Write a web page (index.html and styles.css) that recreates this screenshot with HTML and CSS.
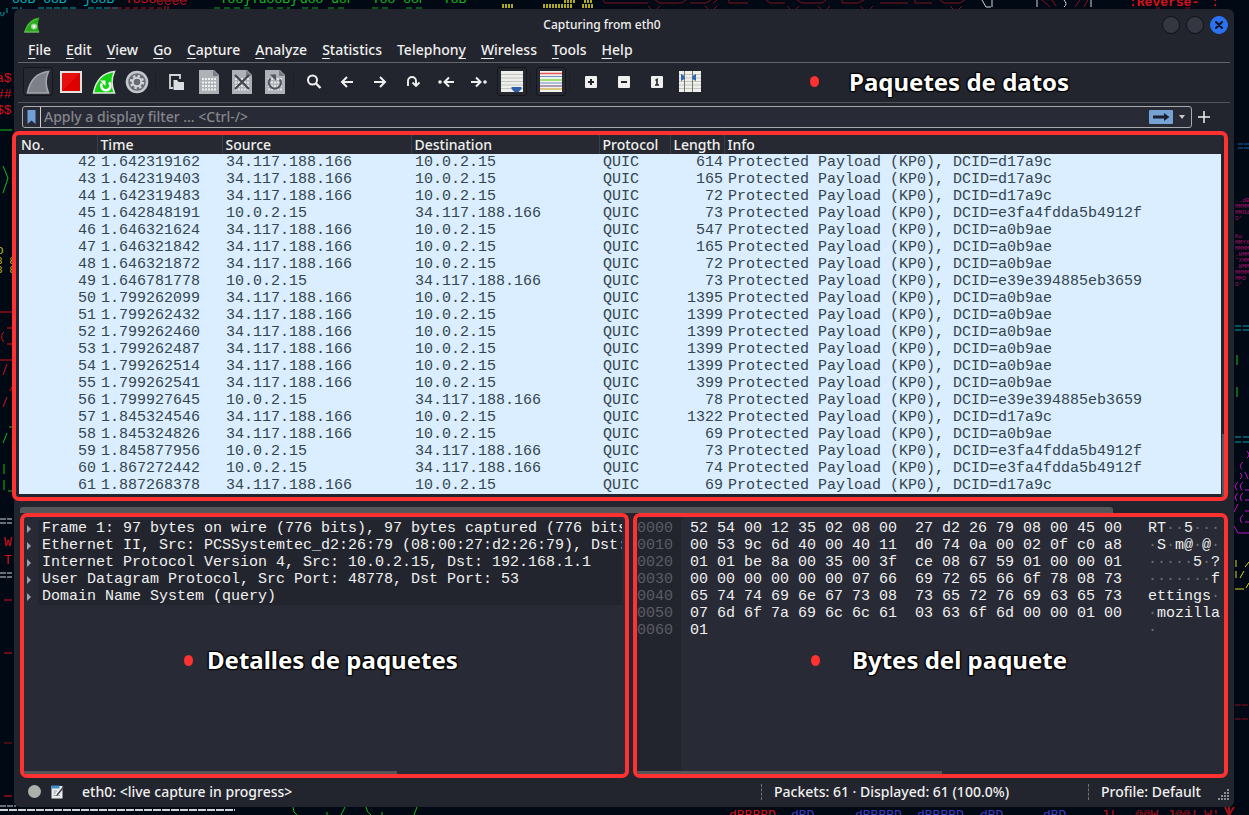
FILE: index.html
```html
<!DOCTYPE html>
<html lang="en">
<head>
<meta charset="utf-8">
<title>Capturing from eth0</title>
<link rel="stylesheet" href="styles.css">
</head>
<body>
<svg class="wallpaper" aria-hidden="true">
  <g class="art">
    <g class="cyan"><text x="12" y="3">o8B o8B</text><text x="83" y="3">j88B</text></g>
    <g class="red"><text x="125" y="3">Y8S8@@@@"</text><text x="4" y="546">W</text><text x="4" y="564">T</text><text x="-4" y="82">a$</text><text x="-4" y="98">##</text><text x="-4" y="114">$$</text><text x="1129" y="6" class="bold">:Reverse-</text><text x="1211" y="6">:</text><text x="729" y="819">dBBBBD</text></g>
    <g class="green"><text x="212" y="3">`Y88}Yd88B}</text><text x="300" y="3">d88 d8P</text><text x="372" y="3">Y88 88P</text><text x="443" y="3">Y8B</text></g>
    <g class="yellow"><text x="-4" y="254">o d</text><text x="-4" y="264" class="small">8 8</text><text x="-4" y="273" class="small">8 8</text></g>
    <g class="blue"><text x="791" y="819">dBD</text><text x="855" y="819">dBBBBD</text><text x="917" y="819">dBBBBD</text><text x="980" y="819">dBD</text><text x="1043" y="819">dBD</text></g>
    <g class="darkred"><text x="1101" y="819" class="bold">J|</text><text x="1135" y="819" class="bold">@@W</text><text x="1167" y="819" class="bold">J@@|</text><text x="1204" y="819" class="bold">W'</text></g>
    <g class="tiny"><text x="1235" y="202">..dBd</text><text x="1235" y="208">MMMM</text><text x="1235" y="214">MMOdd</text><text x="1235" y="220">O'</text><text x="1235" y="238">Ko</text><text x="1235" y="244">MMYXo</text><text x="1235" y="250">MMMMM</text><text x="1235" y="256">.HMMM</text><text x="1235" y="262">'XMMM</text><text x="1235" y="268">.WMMM</text><text x="1235" y="274">MMMMH</text><text x="1235" y="280">MMO</text><text x="1235" y="286">O'</text></g>
  </g>
  <g class="lines">
    <path stroke="#00a0aa" stroke-dasharray="6 2" d="M12 8H22M38 8H76M88 8H118M1235 326H1249M1235 330H1249M1235 437H1249M1235 442H1249"/>
    <path stroke="#00a0aa" d="M1 12C-1 17 5 17 4 12M7 8V13"/>
    <path stroke="#0a64b4" stroke-dasharray="5 1" d="M1238 144H1249M1238 148H1249"/>
    <path stroke="#a01018" stroke-dasharray="5 3" d="M109 8H162"/>
    <path stroke="#d8101c" d="M165 6V9M168 6V9M0 312H12M7 328H12M4 332C1 334 1 340 4 342M7 344H12M0 360H12M7 364L3 375M12 387L10 391M7 397L3 407M4 600H12M4 653H12M4 796H12"/>
    <path stroke="#8a0f1c" d="M4 743H12"/>
    <path stroke="#7d101c" d="M603 0L605 3H648M655 0L660 3H682L686 0M690 3H706L711 0M717 0L713 3M729 0V3H748M766 0L770 3H785M797 0L802 3H822L826 0M842 0V3H858L864 0M880 3H908M915 0V3H932M940 0L944 3H960L965 0M648 6L651 9M657 9L660 6M705 6L708 9M714 9L717 6M787 6L790 9M796 9L799 6M818 6L821 9M827 9L830 6M860 6L863 9M870 9L873 6M950 6L953 9M959 9L962 6"/>
    <path stroke="#8a0f1c" d="M1042 0L1050 7M1052 0L1056 6M1080 0L1075 7M1088 0L1084 7M1185 8H1190M1156 8H1160"/>
    <path stroke="#8a0f1c" stroke-dasharray="6 1" d="M1235 705H1249M1235 719H1249"/>
    <path stroke="#a01018" stroke-width="2" d="M1225 807L1229 815M1234 807L1229 815M1229 806V815"/>
    <path stroke="#14a01e" stroke-dasharray="6 4" d="M214 8H250M267 8H290M302 8H318M328 8H344M372 8H388M406 8H426"/>
    <path stroke="#14b81e" d="M0 130H12M3 166L8 178L3 193M7 433L3 443M9 427H12M4 464V474M4 480V490M8 491H12M1237 355V365M1237 387V397M293 807Q293 813 297 815M327 812V815M345 807L341 815M366 807Q367 813 371 815M382 812V815M417 807L414 815"/>
    <path stroke="#d0d4d8" d="M982 0L986 7H991M992 0V7M1037 0V7M1064 0Q1068 4 1064 7M1091 0V7"/>
    <path stroke="#d0d4d8" stroke-dasharray="6 1" d="M0 519H12M0 523H12M0 573H12M0 577H12M0 806H16"/>
    <path stroke="#d0d4d8" stroke-width="2" stroke-dasharray="8 1" d="M0 810H235"/>
    <path stroke="#b0aa18" stroke-width="4" stroke-dasharray="2 1" d="M502 6H513M543 6H573M582 6H593M564 1H576M584 1H593"/>
    <path stroke="#c010c4" d="M1247 451Q1251 455 1247 458M1243 462Q1238 466 1242 469M1240 473Q1244 476 1240 479M1245 472L1248 479M1238 482Q1233 486 1237 490M1243 482Q1238 486 1242 490M1245 490H1249M1238 493Q1233 497 1237 501M1243 493Q1238 497 1242 501M1245 500H1249M1238 504L1234 512M1245 511H1249M1243 515Q1238 519 1242 523M1245 522H1249M1234 526L1238 533H1249"/>
    <path stroke="#d8d414" d="M1236 560V567M1236 571V578M1249 562L1245 567M1244 571L1240 578M1249 583L1246 588M1235 589H1244"/>
  </g>
</svg>

<main class="window">
  <header class="titlebar">
    <svg class="logo" viewBox="0 0 16 16"><path d="M0.5 15.5C2 7 7 1.500 15.500 0.500C13.500 5 13.500 10 15.500 15.500Z" fill="#2aa81c"/><path d="M0.500 15.500C3 8 7 3.500 13 2" fill="none" stroke="#57c84b"/><path d="M1 15H15" stroke="#86bd80"/><circle cx="10" cy="9.500" r="3" fill="#a5d7a0"/><circle cx="10" cy="9.500" r="1.300" fill="#fff"/></svg>
    <h1>Capturing from eth0</h1>
    <div class="controls">
      <button class="ctl" aria-label="Minimize"></button>
      <button class="ctl" aria-label="Maximize"></button>
      <button class="ctl close" aria-label="Close"><svg viewBox="0 0 8 8"><path d="M1 1L7 7M7 1L1 7" stroke="#10131c" stroke-width="2" stroke-linecap="round"/></svg></button>
    </div>
  </header>

  <nav class="menubar">
    <button><u>F</u>ile</button><button><u>E</u>dit</button><button><u>V</u>iew</button><button><u>G</u>o</button><button><u>C</u>apture</button><button><u>A</u>nalyze</button><button><u>S</u>tatistics</button><button>Telephon<u>y</u></button><button><u>W</u>ireless</button><button><u>T</u>ools</button><button><u>H</u>elp</button>
  </nav>

  <div class="toolbar">
    <button class="tool on" aria-label="Start capture"><svg viewBox="0 0 24 24"><path d="M1.500 23C3.500 12 9 3 22.500 1.500C19 9 19.500 16 22.500 23Z" fill="#7d8088" stroke="#a5a8ae" stroke-width="1.600"/></svg></button>
    <button class="tool" aria-label="Stop capture"><svg viewBox="0 0 24 24"><rect x="2" y="2" width="20" height="20" fill="#df0000" stroke="#e6e2de" stroke-width="2"/><path d="M3 21L21 3H3Z" fill="#f02020" opacity=".5"/></svg></button>
    <button class="tool" aria-label="Restart capture"><svg viewBox="0 0 24 24"><path d="M1.500 23C3.500 12 9 3 22.500 1.500C19 9 19.500 16 22.500 23Z" fill="#14d214" stroke="#dfe8dd" stroke-width="1.500"/><path d="M10 13.500A4.500 4.500 0 1 0 17 12.500" fill="none" stroke="#fff" stroke-width="2.600"/><path d="M8 10.500H13.500V16Z" fill="#fff"/></svg></button>
    <button class="tool" aria-label="Capture options"><svg viewBox="0 0 24 24"><circle cx="12" cy="12" r="10" fill="#686b74" stroke="#c4c6cb" stroke-width="2.600"/><circle cx="12" cy="12" r="6" fill="none" stroke="#d2d4d8" stroke-width="2.400" stroke-dasharray="2.400 2.300"/><circle cx="12" cy="12" r="4.300" fill="none" stroke="#d2d4d8" stroke-width="2"/></svg></button>
    <span class="sep"></span>
    <button class="tool" aria-label="Open"><svg viewBox="0 0 24 24"><path d="M9 18H6V5H16V9" fill="none" stroke="#d5d6d9" stroke-width="1.800"/><path d="M9.500 10H13L14.500 12H20V20H9.500Z" fill="#dcdde0"/></svg></button>
    <button class="tool" aria-label="Save"><svg viewBox="0 0 24 24"><path d="M2 0H17L22 5V24H2Z" fill="#aeb1b7"/><path d="M16 0V6H22Z" fill="#787b83"/><path d="M5 9H19M5 12.500H19M5 16H19M5 19.500H19" stroke="#f0f0f1" stroke-width="2.200" stroke-dasharray="2 1"/></svg></button>
    <button class="tool" aria-label="Close file"><svg viewBox="0 0 24 24"><path d="M2 0H17L22 5V24H2Z" fill="#aeb1b7"/><path d="M16 0V6H22Z" fill="#787b83"/><path d="M5 9H19M5 12.500H19M5 16H19M5 19.500H19" stroke="#e5e6e8" stroke-width="2.200" stroke-dasharray="2 1"/><path d="M5 5L19 19M19 5L5 19" stroke="#41444c" stroke-width="2"/></svg></button>
    <button class="tool" aria-label="Reload file"><svg viewBox="0 0 24 24"><path d="M2 0H17L22 5V24H2Z" fill="#aeb1b7"/><path d="M16 0V6H22Z" fill="#787b83"/><path d="M5 9H19M5 12.500H19M5 16H19M5 19.500H19" stroke="#e5e6e8" stroke-width="2.200" stroke-dasharray="2 1"/><path d="M7.500 8.500A6 6 0 1 0 17 9.500" fill="none" stroke="#545760" stroke-width="2.200"/><path d="M7 4.500H13V11Z" fill="#545760"/></svg></button>
    <span class="sep"></span>
    <button class="tool" aria-label="Find"><svg viewBox="0 0 24 24"><circle cx="10.500" cy="10" r="4.500" fill="none" stroke="#f0f0f0" stroke-width="2"/><path d="M14 13.500L18.500 18" stroke="#f0f0f0" stroke-width="2.400"/></svg></button>
    <button class="tool" aria-label="Previous"><svg viewBox="0 0 24 24"><path d="M18 12H7M12 7L7 12L12 17" fill="none" stroke="#f0f0f0" stroke-width="2"/></svg></button>
    <button class="tool" aria-label="Next"><svg viewBox="0 0 24 24"><path d="M6 12H17M12 7L17 12L12 17" fill="none" stroke="#f0f0f0" stroke-width="2"/></svg></button>
    <button class="tool" aria-label="Go to packet"><svg viewBox="0 0 24 24"><path d="M7 16V11A4 4 0 0 1 15 11V15M11.500 12.500L15 16L18.500 12.500" fill="none" stroke="#f0f0f0" stroke-width="1.900"/></svg></button>
    <button class="tool" aria-label="First packet"><svg viewBox="0 0 24 24"><path d="M20 12H11M15 7.500L10.500 12L15 16.500" fill="none" stroke="#f0f0f0" stroke-width="2"/><circle cx="6" cy="12" r="1.800" fill="#f0f0f0"/></svg></button>
    <button class="tool" aria-label="Last packet"><svg viewBox="0 0 24 24"><path d="M4 12H13M9 7.500L13.500 12L9 16.500" fill="none" stroke="#f0f0f0" stroke-width="2"/><circle cx="18" cy="12" r="1.800" fill="#f0f0f0"/></svg></button>
    <button class="tool on" aria-label="Auto scroll"><svg viewBox="0 0 24 24"><rect x="1" y="1" width="22" height="21" fill="#eeeeeb"/><path d="M1 4.500H23M1 8H23M1 11.500H23M1 15H23M1 18.500H23" stroke="#c3c3bf"/><path d="M11.500 17H21.500V19L18.500 22H14.500L11.500 19Z" fill="#2d5fa8"/></svg></button>
    <span class="sep"></span>
    <button class="tool on" aria-label="Colorize"><svg viewBox="0 0 24 24"><rect x="1" y="1" width="22" height="21" fill="#f1f1ee"/><path d="M1 3.500H23" stroke="#ef5555" stroke-width="1.500"/><path d="M1 6.500H23M1 13H23" stroke="#6e8fc4" stroke-width="1.200"/><path d="M1 10H23" stroke="#86d94d" stroke-width="1.500"/><path d="M1 16H23" stroke="#8a6b99" stroke-width="1.300"/><path d="M1 19H23" stroke="#d3b456" stroke-width="1.500"/></svg></button>
    <span class="sep wide"></span>
    <button class="tool" aria-label="Zoom in"><svg viewBox="0 0 24 24"><rect x="6" y="6" width="12" height="12" rx="1" fill="#efefef"/><path d="M9 12H15M12 9V15" stroke="#22242c" stroke-width="2"/></svg></button>
    <button class="tool" aria-label="Zoom out"><svg viewBox="0 0 24 24"><rect x="6" y="6" width="12" height="12" rx="1" fill="#efefef"/><path d="M9 12H15" stroke="#22242c" stroke-width="2"/></svg></button>
    <button class="tool" aria-label="Normal size"><svg viewBox="0 0 24 24"><rect x="6" y="6" width="12" height="12" rx="1" fill="#efefef"/><path d="M10.500 10.500L12 9.500V15M10 15H14" fill="none" stroke="#22242c" stroke-width="1.600"/></svg></button>
    <button class="tool" aria-label="Resize columns"><svg viewBox="0 0 24 24"><rect x="1" y="1" width="22" height="21" fill="#eeeeeb"/><path d="M1 4.500H23M1 8H23M1 11.500H23M1 15H23M1 18.500H23" stroke="#c3c3bf"/><path d="M6.500 1V22M14.500 1V22" stroke="#77776f"/><path d="M3 4L6.500 6V9L3 11ZM18 4L14.500 6V9L18 11Z" fill="#2d66b4"/></svg></button>
    <p class="callout callout-list"><i></i>Paquetes de datos</p>
  </div>

  <form class="filterbar">
    <div class="filter">
      <button type="button" class="bookmark" aria-label="Bookmarks"><svg viewBox="0 0 9 14"><path d="M0.500 0H8.500V14L4.500 10.500L0.500 14Z" fill="#6fa0d8"/></svg></button>
      <input type="text" aria-label="Display filter" placeholder="Apply a display filter … &lt;Ctrl-/&gt;">
      <button type="button" class="apply" aria-label="Apply filter"><svg viewBox="0 0 24 14"><rect width="24" height="14" rx="1" fill="#76a3d6"/><path d="M4 5.500H15V3L20.500 7L15 11V8.500H4Z" fill="#1b2130"/></svg></button>
      <button type="button" class="history" aria-label="Recent filters"></button>
    </div>
    <button type="button" class="add" aria-label="Add filter button"><svg viewBox="0 0 12 12"><path d="M6 0V12M0 6H12" stroke="#f0f0f0" stroke-width="1.500"/></svg></button>
  </form>

  <section class="packets frame">
    <table>
      <colgroup><col class="c-no"><col class="c-time"><col class="c-src"><col class="c-dst"><col class="c-proto"><col class="c-len"><col></colgroup>
      <thead><tr><th>No.</th><th>Time</th><th>Source</th><th>Destination</th><th>Protocol</th><th>Length</th><th>Info</th></tr></thead>
      <tbody>
<tr><td>42</td><td>1.642319162</td><td>34.117.188.166</td><td>10.0.2.15</td><td>QUIC</td><td>614</td><td>Protected Payload (KP0), DCID=d17a9c</td></tr>
<tr><td>43</td><td>1.642319403</td><td>34.117.188.166</td><td>10.0.2.15</td><td>QUIC</td><td>165</td><td>Protected Payload (KP0), DCID=d17a9c</td></tr>
<tr><td>44</td><td>1.642319483</td><td>34.117.188.166</td><td>10.0.2.15</td><td>QUIC</td><td>72</td><td>Protected Payload (KP0), DCID=d17a9c</td></tr>
<tr><td>45</td><td>1.642848191</td><td>10.0.2.15</td><td>34.117.188.166</td><td>QUIC</td><td>73</td><td>Protected Payload (KP0), DCID=e3fa4fdda5b4912f</td></tr>
<tr><td>46</td><td>1.646321624</td><td>34.117.188.166</td><td>10.0.2.15</td><td>QUIC</td><td>547</td><td>Protected Payload (KP0), DCID=a0b9ae</td></tr>
<tr><td>47</td><td>1.646321842</td><td>34.117.188.166</td><td>10.0.2.15</td><td>QUIC</td><td>165</td><td>Protected Payload (KP0), DCID=a0b9ae</td></tr>
<tr><td>48</td><td>1.646321872</td><td>34.117.188.166</td><td>10.0.2.15</td><td>QUIC</td><td>72</td><td>Protected Payload (KP0), DCID=a0b9ae</td></tr>
<tr><td>49</td><td>1.646781778</td><td>10.0.2.15</td><td>34.117.188.166</td><td>QUIC</td><td>73</td><td>Protected Payload (KP0), DCID=e39e394885eb3659</td></tr>
<tr><td>50</td><td>1.799262099</td><td>34.117.188.166</td><td>10.0.2.15</td><td>QUIC</td><td>1395</td><td>Protected Payload (KP0), DCID=a0b9ae</td></tr>
<tr><td>51</td><td>1.799262432</td><td>34.117.188.166</td><td>10.0.2.15</td><td>QUIC</td><td>1399</td><td>Protected Payload (KP0), DCID=a0b9ae</td></tr>
<tr><td>52</td><td>1.799262460</td><td>34.117.188.166</td><td>10.0.2.15</td><td>QUIC</td><td>1399</td><td>Protected Payload (KP0), DCID=a0b9ae</td></tr>
<tr><td>53</td><td>1.799262487</td><td>34.117.188.166</td><td>10.0.2.15</td><td>QUIC</td><td>1399</td><td>Protected Payload (KP0), DCID=a0b9ae</td></tr>
<tr><td>54</td><td>1.799262514</td><td>34.117.188.166</td><td>10.0.2.15</td><td>QUIC</td><td>1399</td><td>Protected Payload (KP0), DCID=a0b9ae</td></tr>
<tr><td>55</td><td>1.799262541</td><td>34.117.188.166</td><td>10.0.2.15</td><td>QUIC</td><td>399</td><td>Protected Payload (KP0), DCID=a0b9ae</td></tr>
<tr><td>56</td><td>1.799927645</td><td>10.0.2.15</td><td>34.117.188.166</td><td>QUIC</td><td>78</td><td>Protected Payload (KP0), DCID=e39e394885eb3659</td></tr>
<tr><td>57</td><td>1.845324546</td><td>34.117.188.166</td><td>10.0.2.15</td><td>QUIC</td><td>1322</td><td>Protected Payload (KP0), DCID=d17a9c</td></tr>
<tr><td>58</td><td>1.845324826</td><td>34.117.188.166</td><td>10.0.2.15</td><td>QUIC</td><td>69</td><td>Protected Payload (KP0), DCID=a0b9ae</td></tr>
<tr><td>59</td><td>1.845877956</td><td>10.0.2.15</td><td>34.117.188.166</td><td>QUIC</td><td>73</td><td>Protected Payload (KP0), DCID=e3fa4fdda5b4912f</td></tr>
<tr><td>60</td><td>1.867272442</td><td>10.0.2.15</td><td>34.117.188.166</td><td>QUIC</td><td>74</td><td>Protected Payload (KP0), DCID=e3fa4fdda5b4912f</td></tr>
<tr><td>61</td><td>1.887268378</td><td>34.117.188.166</td><td>10.0.2.15</td><td>QUIC</td><td>69</td><td>Protected Payload (KP0), DCID=d17a9c</td></tr>
      </tbody>
    </table>
    <span class="vthumb"></span>
  </section>
  <div class="hscroll"><span></span></div>

  <div class="split">
    <section class="details frame">
      <ul>
        <li><span>Frame 1: 97 bytes on wire (776 bits), 97 bytes captured (776 bits</span></li>
        <li><span>Ethernet II, Src: PCSSystemtec_d2:26:79 (08:00:27:d2:26:79), Dst:</span></li>
        <li><span>Internet Protocol Version 4, Src: 10.0.2.15, Dst: 192.168.1.1</span></li>
        <li><span>User Datagram Protocol, Src Port: 48778, Dst Port: 53</span></li>
        <li><span>Domain Name System (query)</span></li>
      </ul>
      <p class="callout callout-details"><i></i>Detalles de paquetes</p>
      <span class="hthumb"></span>
    </section>
    <section class="bytes frame">
      <div class="hexdump">
        <pre class="offsets">0000
0010
0020
0030
0040
0050
0060</pre>
        <pre class="hex">52 54 00 12 35 02 08 00  27 d2 26 79 08 00 45 00
00 53 9c 6d 40 00 40 11  d0 74 0a 00 02 0f c0 a8
01 01 be 8a 00 35 00 3f  ce 08 67 59 01 00 00 01
00 00 00 00 00 00 07 66  69 72 65 66 6f 78 08 73
65 74 74 69 6e 67 73 08  73 65 72 76 69 63 65 73
07 6d 6f 7a 69 6c 6c 61  03 63 6f 6d 00 00 01 00
01</pre>
        <pre class="ascii">RT<s>··</s>5<s>···</s>
<s>·</s>S<s>·</s>m@<s>·</s>@<s>·</s>
<s>·····</s>5<s>·</s>?
<s>·······</s>f
ettings<s>·</s>
<s>·</s>mozilla
<s>·</s></pre>
      </div>
      <p class="callout callout-bytes"><i></i>Bytes del paquete</p>
      <span class="hthumb"></span>
    </section>
  </div>

  <footer class="status">
    <span class="led"></span>
    <svg class="note" viewBox="0 0 13 14"><rect x="0.500" y="1" width="11" height="12.500" fill="#eceeee"/><rect x="0.500" y="0.500" width="8" height="3" fill="#3f8fcb"/><path d="M2.500 6H6M2.500 8H5M2.500 10.500H9" stroke="#9aa0a6"/><path d="M12 1.500L6 9L5 11L7 10L12.800 3Z" fill="#3b4048"/></svg>
    <span class="source">eth0: &lt;live capture in progress&gt;</span>
    <span class="count">Packets: 61 · Displayed: 61 (100.0%)</span>
    <span class="profile">Profile: Default</span>
    <svg class="grip" viewBox="0 0 12 12"><path d="M10 1h2M7 4h2M10 4h2M4 7h2M7 7h2M10 7h2M1 10h2M4 10h2M7 10h2M10 10h2" stroke="#8b8d94" stroke-width="2"/></svg>
  </footer>
</main>
</body>
</html>
```
FILE: styles.css
```css
* { box-sizing: border-box; }
body {
  margin: 0;
  min-height: 100vh;
  display: flex;
  padding: 9px 15px 8px 14px;
  background: #010a14;
  color: #f0f0f0;
  font: 14px/20px "Noto Sans", sans-serif;
  overflow: hidden;
}
button {
  padding: 0;
  border: 0;
  background: none;
  color: inherit;
  font: inherit;
}
svg { display: block; }
h1, p, ul, pre { margin: 0; }

.wallpaper { position: absolute; left: 0; top: 0; width: 100%; height: 100%; }
.art { font: 13px "Liberation Mono", monospace; white-space: pre; }
.art text { white-space: pre; }
.lines { fill: none; stroke-width: 1; }
.bold { font-weight: bold; }
.small { font-size: 11px; }
.cyan { fill: #00b4be; }
.red { fill: #d8101c; }
.darkred { fill: #8a0f1c; }
.green { fill: #14b81e; }
.yellow { fill: #b8b414; }
.blue { fill: #3c3cc8; }
.tiny { fill: #a0106a; font-size: 6px; }

.window {
  position: relative;
  flex: 1;
  min-width: 0;
  display: flex;
  flex-direction: column;
  background: #23252e;
  border-radius: 6px;
}
.titlebar {
  display: grid;
  grid-template-columns: 72px 1fr 72px;
  align-items: center;
  height: 31px;
  padding: 0 6px 0 10px;
}
.titlebar h1 { padding-right: 48px; font-size: 12px; font-weight: 500; text-align: center; }
.logo { width: 16px; height: 16px; }
.controls { display: flex; justify-content: flex-end; gap: 6px; }
.ctl {
  display: grid;
  place-items: center;
  width: 18px;
  height: 18px;
  border: 1px solid #0f1116;
  border-radius: 50%;
  background: #343741;
}
.ctl.close { border-color: #2a72f2; background: #2a72f2; }
.ctl svg { width: 8px; height: 8px; }

.menubar {
  display: flex;
  align-items: flex-start;
  gap: 15px;
  height: 23px;
  margin: 0 4px;
  padding: 0 10px;
  border-bottom: 1px solid #62656c;
  font-weight: 500;
}
.menubar u { text-underline-offset: 3px; }

.toolbar {
  display: flex;
  align-items: center;
  gap: 3px;
  margin: 0 4px;
  padding: 4px 5px 6px;
  border-bottom: 1px solid #50535a;
}
.tool { display: grid; place-items: center; width: 30px; height: 29px; border-radius: 3px; }
.tool.on { border: 1px solid #14161b; background: #262932; }
.tool svg { width: 24px; height: 24px; }
.sep { width: 3px; height: 20px; border-left: 1px solid #1d1f26; }
.sep.wide { width: 4px; }

.callout {
  display: flex;
  align-items: center;
  color: #fff;
  font-size: 24px;
  font-weight: 700;
  line-height: 32px;
  white-space: nowrap;
  text-shadow: 1px 1px 1px #000, -1px -1px 1px #000, 1px -1px 1px #000, -1px 1px 1px #000;
}
.callout i { width: 9px; height: 11px; border-radius: 50%; background: #ff3131; }
.toolbar .callout { height: 20px; margin-left: 102px; gap: 30px; }

.filterbar { display: flex; align-items: center; gap: 6px; height: 28px; padding: 0 24px 0 8px; }
.filter {
  display: flex;
  align-items: center;
  flex: 1;
  height: 22px;
  border: 1px solid #a9aaad;
  border-radius: 3px;
  background: #282a35;
}
.bookmark { display: grid; place-items: center; width: 18px; height: 20px; border-right: 1px solid #d0d0d2; }
.bookmark svg { width: 9px; height: 14px; }
.filter input {
  flex: 1;
  min-width: 0;
  height: 20px;
  padding: 0 3px;
  border: 0;
  outline: 0;
  background: none;
  color: #f0f0f0;
  font: inherit;
  font-weight: 500;
}
.filter input::placeholder { color: #85868c; opacity: 1; }
.apply svg { width: 24px; height: 14px; }
.history { width: 18px; height: 20px; display: grid; place-items: center; }
.history::before { content: ""; border: 3px solid transparent; border-top: 4px solid #c8c8ca; border-bottom: 0; }
.add svg { width: 12px; height: 12px; }

.frame { position: relative; border: 4px solid #ff3131; border-radius: 7px; }
.packets { margin: 0 6px 0 -2px; padding: 0 3px 3px; overflow: hidden; }
table { width: 100%; table-layout: fixed; border-collapse: collapse; }
.c-no { width: 78px; }
.c-time { width: 125px; }
.c-src { width: 189px; }
.c-dst { width: 188px; }
.c-proto { width: 71px; }
.c-len { width: 54px; }
th {
  height: 19px;
  padding: 0 3px 1px;
  border-right: 1px solid #3b3e47;
  background: #262931;
  font-weight: 500;
  line-height: 17px;
  text-align: left;
}
th:first-child { padding-left: 2px; }
th:last-child { border-right: 0; }
td {
  height: 17px;
  padding: 0 4px;
  background: #daeeff;
  color: #34454f;
  font: 15px/17px "Liberation Mono", monospace;
  white-space: pre;
}
td:nth-child(1), td:nth-child(6) { padding: 0 1px; text-align: right; }
.vthumb { position: absolute; right: 0; bottom: 0; width: 2px; height: 63px; background: #55575d; }
.hscroll { height: 12px; padding: 6px 0 0 6px; }
.hscroll span { display: block; width: 90%; height: 6px; border-radius: 3px 3px 0 0; background: #55565a; }

.split { flex: 1; display: grid; grid-template-columns: 609fr 595fr; gap: 4px; min-height: 0; padding: 0 6px; }
.details, .bytes { min-width: 0; overflow: hidden; background: #282a35; }
.details ul { padding: 3px 3px 0 0; list-style: none; }
.details li, .hexdump pre { font: 15px/17px "Liberation Mono", monospace; }
.details li { display: flex; align-items: center; white-space: pre; }
.details li::before { content: ""; width: 0; margin: 0 7px 0 3px; border: 4px solid transparent; border-left: 4px solid #a0a1a5; border-right: 0; }
.details li span { flex: 1; min-width: 0; overflow: hidden; padding-left: 4px; background: #23252e; }
.hexdump { display: flex; height: 100%; }
.hexdump pre { padding-top: 3px; }
.offsets { width: 44px; background: #23252e; color: #5b5d64; }
.hex { width: 467px; padding-left: 9px; }
.ascii s { color: #6b6d74; text-decoration: none; }
.hthumb { position: absolute; left: 0; bottom: 0; height: 3px; background: #55565a; }
.details .hthumb { width: 62%; }
.bytes .hthumb { width: 52%; }
.callout-details { position: absolute; left: 160px; top: 127px; gap: 14px; }
.callout-bytes { position: absolute; left: 174px; top: 127px; gap: 32px; }

.status { display: flex; align-items: center; height: 29px; padding: 0 5px 2px 14px; font-weight: 500; }
.led { width: 13px; height: 13px; border-radius: 50%; background: #aeb0ac; }
.note { width: 13px; height: 14px; margin-left: 10px; }
.source { flex: 1; padding-left: 18px; }
.count, .profile { padding-left: 12px; border-left: 1px dashed #6d7077; line-height: 16px; }
.count { width: 327px; }
.profile { width: 129px; }
.grip { width: 12px; height: 12px; align-self: flex-end; margin-bottom: 4px; }
```
